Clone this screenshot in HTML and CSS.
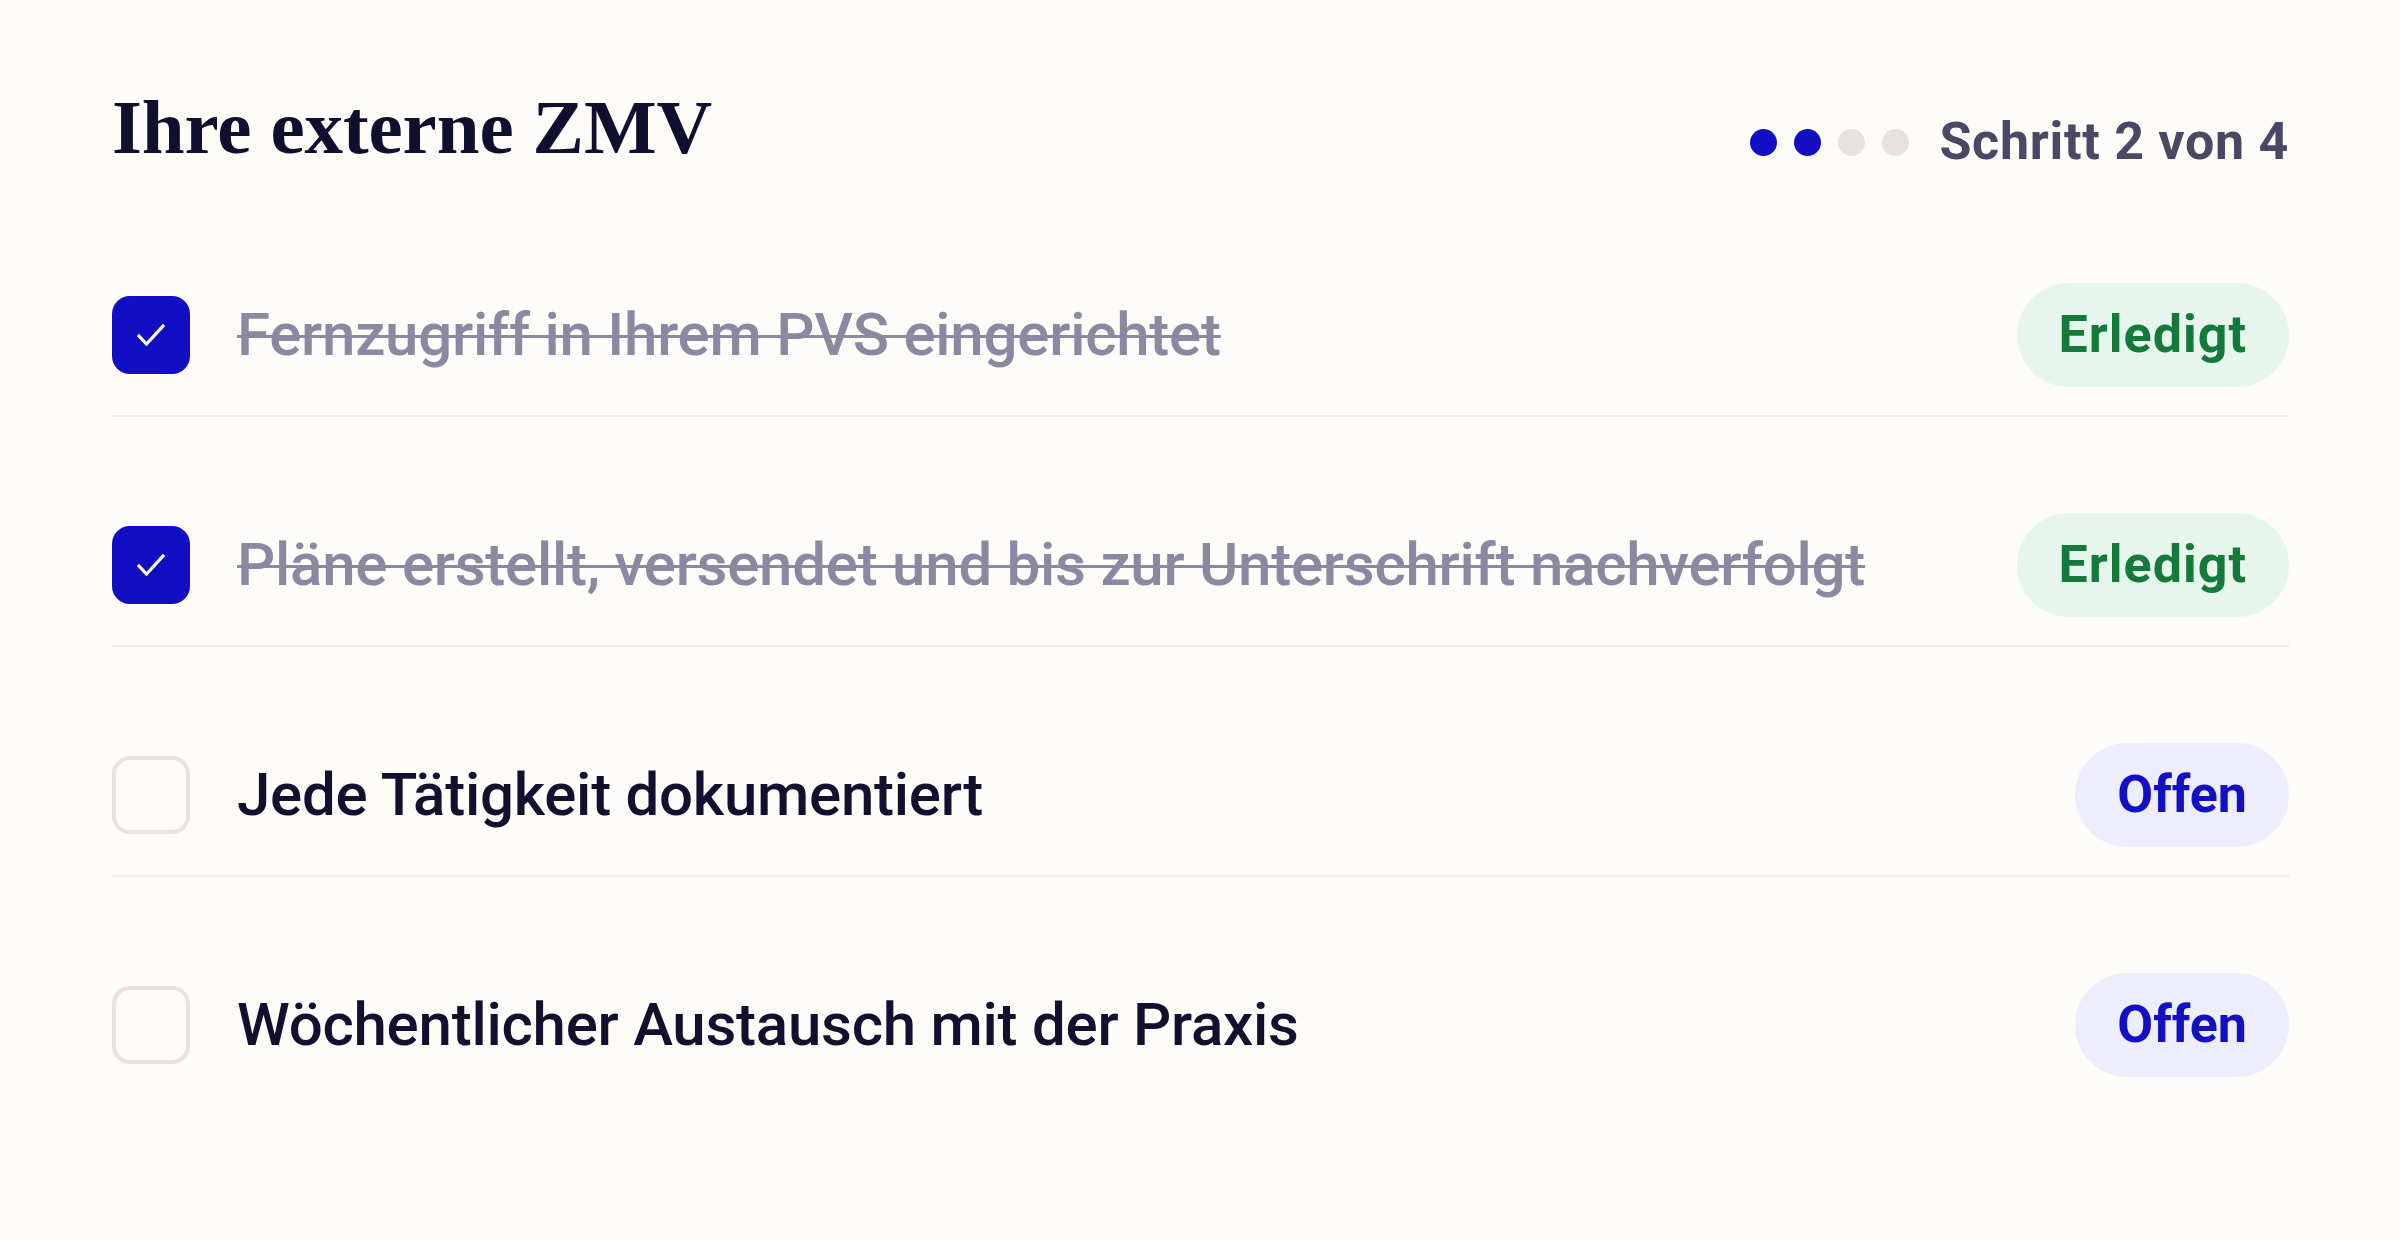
FILE: index.html
```html
<!DOCTYPE html>
<html lang="de">
<head>
<meta charset="utf-8">
<title>Ihre externe ZMV</title>
<link rel="stylesheet" href="styles.css">
</head>
<body>
<main class="card">
  <header class="header">
    <h1 class="title">Ihre externe ZMV</h1>
    <div class="step">
      <span class="dots">
        <span class="dot dot-on"></span>
        <span class="dot dot-on"></span>
        <span class="dot"></span>
        <span class="dot"></span>
      </span>
      <span class="step-label">Schritt 2 von 4</span>
    </div>
  </header>
  <ul class="list">
    <li class="row">
      <span class="box box-checked">
        <svg viewBox="0 0 28 22" width="28" height="22"><path d="M2 12 L9.5 20 L26 2" fill="none" stroke="#fff" stroke-width="3.2" stroke-linecap="square" stroke-linejoin="miter"/></svg>
      </span>
      <span class="label label-done">Fernzugriff in Ihrem PVS eingerichtet</span>
      <span class="badge badge-done">Erledigt</span>
    </li>
    <li class="row">
      <span class="box box-checked">
        <svg viewBox="0 0 28 22" width="28" height="22"><path d="M2 12 L9.5 20 L26 2" fill="none" stroke="#fff" stroke-width="3.2" stroke-linecap="square" stroke-linejoin="miter"/></svg>
      </span>
      <span class="label label-done">Pläne erstellt, versendet und bis zur Unterschrift nachverfolgt</span>
      <span class="badge badge-done">Erledigt</span>
    </li>
    <li class="row">
      <span class="box"></span>
      <span class="label">Jede Tätigkeit dokumentiert</span>
      <span class="badge badge-open">Offen</span>
    </li>
    <li class="row">
      <span class="box"></span>
      <span class="label">Wöchentlicher Austausch mit der Praxis</span>
      <span class="badge badge-open">Offen</span>
    </li>
  </ul>
</main>
</body>
</html>
```
FILE: styles.css
```css
html, body {
  margin: 0;
  padding: 0;
  background: #fdfcf9;
}

body {
  font-family: Roboto, "Noto Sans", sans-serif;
  color: #12102e;
}

.card {
  padding: 89px 111px 0 112px;
}

.header {
  display: flex;
  justify-content: space-between;
  align-items: flex-start;
}

.title {
  margin: 0;
  font-family: "Liberation Serif", serif;
  font-weight: 700;
  font-size: 77px;
  line-height: 1;
  letter-spacing: -0.1px;
  color: #110f2e;
}

.step {
  display: flex;
  align-items: center;
  gap: 30px;
  margin-top: 27px;
}

.dots {
  display: flex;
  gap: 17px;
}

.dot {
  width: 27px;
  height: 27px;
  border-radius: 50%;
  background: #e5e3dd;
}

.dot-on {
  background: #110ec4;
}

.step-label {
  font-size: 52px;
  line-height: 1;
  font-weight: 700;
  letter-spacing: 0.7px;
  color: #4b4866;
}

.list {
  list-style: none;
  margin: 0;
  padding: 0;
  margin-top: 19px;
}

.row {
  display: flex;
  align-items: center;
  gap: 47px;
  padding: 96px 0 28px;
  border-bottom: 2px solid #eeede8;
}

.row:last-child {
  border-bottom: none;
}

.box {
  flex: none;
  width: 78px;
  height: 78px;
  box-sizing: border-box;
  border-radius: 18px;
  border: 4px solid #e6e4dd;
  display: flex;
  align-items: center;
  justify-content: center;
}

.box-checked {
  background: #110ec4;
  border-color: #110ec4;
}

.label {
  flex: 1;
  font-size: 60px;
  line-height: 1;
  font-weight: 500;
  letter-spacing: -0.25px;
  color: #12102e;
}

.label-done {
  color: #8b89a2;
  text-decoration: line-through;
  text-decoration-thickness: 3px;
}

.badge {
  flex: none;
  height: 104px;
  box-sizing: border-box;
  padding: 0 42px;
  border-radius: 52px;
  display: flex;
  align-items: center;
  font-size: 52px;
  font-weight: 700;
  line-height: 1;
}

.badge-done {
  background: #e6f6ec;
  color: #147a3b;
  letter-spacing: 1px;
}

.badge-open {
  background: #eeedfd;
  color: #1210c2;
}
```
